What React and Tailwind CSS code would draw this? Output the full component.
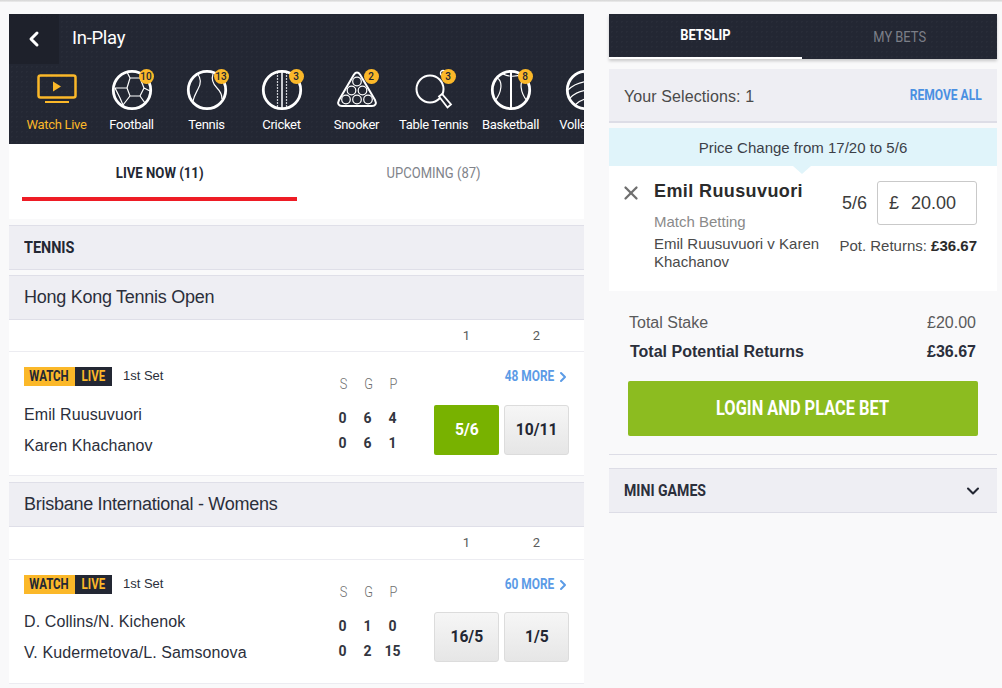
import { ChevronLeft, ChevronRight, ChevronDown, X } from "lucide-react"

const dots = "bg-[#232733] bg-[radial-gradient(#282c38_1px,transparent_1px)] bg-[length:5px_5px]"

const Ring = ({ children }) => (
  <svg width="42" height="42" viewBox="-1 -1 42 42" fill="none" stroke="white" strokeWidth="1.2">
    {children}
    <circle cx="20" cy="20" r="18.7" strokeWidth="2.8" />
  </svg>
)

const icons = {
  football: (
    <Ring>
      <path d="M15 18L18 8H28L32 18L28 26H18ZM15 18H3M18 8L15 2M28 8L33 4M32 18L38 21M18 26L11 35M28 26L33 33M3 18L8 28L11 35" />
    </Ring>
  ),
  tennis: (
    <Ring>
      <path d="M10 3C14 8 14 14 11 19C9 23 7 26 6 31M26 4C24 10 26 14 30 18C33 21 35 24 35 29" />
    </Ring>
  ),
  cricket: (
    <Ring>
      <path d="M15.500 2V38M24.500 2V38" strokeDasharray="2 1" stroke="#c9cbd1" />
      <path d="M20 2V38" strokeWidth="2" stroke="#c9cbd1" />
    </Ring>
  ),
  snooker: (
    <svg width="42" height="42" viewBox="0 0 42 42" fill="none" stroke="white" strokeWidth="1.2">
      <path d="M21 3.500C22 3.500 23 4 24 5.500L39 31C41 35 39 37 36 37H6C3 37 1 35 3 31L18 5.500C19 4 20 3.500 21 3.500Z" strokeWidth="2" />
      <circle cx="21" cy="12.500" r="4.300" />
      <circle cx="15.500" cy="21.500" r="4.300" />
      <circle cx="26.500" cy="21.500" r="4.300" />
      <circle cx="10" cy="30.500" r="4.300" />
      <circle cx="21" cy="30.500" r="4.300" />
      <circle cx="32" cy="30.500" r="4.300" />
    </svg>
  ),
  tabletennis: (
    <svg width="42" height="42" viewBox="0 0 42 42" fill="none" stroke="white" strokeWidth="2">
      <circle cx="17" cy="20" r="13.500" />
      <path d="M26 27.500L29 25L38 35.500L34.500 38.500Z" fill="#232733" strokeWidth="1.800" />
      <circle cx="30" cy="4" r="2.500" strokeWidth="1.400" />
    </svg>
  ),
  basketball: (
    <Ring>
      <path d="M20 2V38" strokeWidth="2" />
      <path d="M6 8C12 11 11 22 4 31M34 8C28 11 29 22 36 31M12 4C18 7 26 7 31 4" />
    </Ring>
  ),
  volleyball: (
    <Ring>
      <path d="M2 20C10 12 22 10 34 12M4 28C12 20 24 18 38 24M9 35C15 28 28 26 36 30M18 2C20 8 26 14 34 12" />
    </Ring>
  ),
}

const sports = [
  { name: "Football", icon: "football", count: 10 },
  { name: "Tennis", icon: "tennis", count: 13 },
  { name: "Cricket", icon: "cricket", count: 3 },
  { name: "Snooker", icon: "snooker", count: 2 },
  { name: "Table Tennis", icon: "tabletennis", count: 3, wide: true },
  { name: "Basketball", icon: "basketball", count: 8 },
  { name: "Volleyball", icon: "volleyball" },
]

const Narrow = ({ children, className = "" }) => (
  <span className={"inline-block font-['Roboto'] whitespace-nowrap " + className}>{children}</span>
)

function SportItem({ sport }) {
  return (
    <div className={"shrink-0 flex flex-col items-center " + (sport.wide ? "w-[79px]" : "w-[75px]")}>
      <div className="relative w-[42px] h-[42px]">
        {icons[sport.icon]}
        {sport.count && (
          <span className="absolute left-[28px] top-0 w-[15px] h-[15px] rounded-full bg-[#fbb829] text-[#232733] text-[10px] leading-[15px] text-center font-['Roboto'] font-medium">
            {sport.count}
          </span>
        )}
      </div>
      <span className="mt-[6px] text-white text-[13px] leading-[16px] tracking-[-0.3px] font-['Roboto'] whitespace-nowrap">{sport.name}</span>
    </div>
  )
}

function Section({ title }) {
  return (
    <div className="h-[45px] mt-[5px] bg-[#eeeef3] border-y border-[#dfdfe8] px-[15px] flex items-center text-[18px] text-[#2b2f3b] font-['Liberation_Sans'] tracking-[-0.27px]">
      {title}
    </div>
  )
}

function Match({ header, offset, nameTop, more, home, away, scoreHome, scoreAway, oddsHome, oddsAway, selected }) {
  return (
    <div className="bg-white">
      <div className={"flex justify-end border-b border-[#ececf1] pr-[15px] pt-[6px] font-['Roboto'] text-[13px] text-[#5b5b5b] " + header}>
        <span className="w-[65px] text-center">1</span>
        <span className="w-[65px] ml-[5px] text-center">2</span>
      </div>
      <div className="relative h-[124px] flex pl-[15px] pr-[15px] border-b border-[#ececf1]">
        <div className="flex-1 pt-[15px]">
          <div className="flex items-center h-[19px]">
            <span className="w-[51px] h-[19px] bg-[#fbb829] text-[#232733] flex items-center justify-center">
              <Narrow className="scale-x-[.82] font-bold text-[14px]">WATCH</Narrow>
            </span>
            <span className="w-[37px] h-[19px] bg-[#232733] text-[#fbb829] flex items-center justify-center">
              <Narrow className="scale-x-[.82] font-bold text-[14px]">LIVE</Narrow>
            </span>
            <span className="ml-[11px] -mt-[2px] text-[13px] text-[#2b2f3b] font-['Liberation_Sans']">1st Set</span>
          </div>
          <div className={"text-[16px] leading-[20px] text-[#2b2f3b] font-['Liberation_Sans'] tracking-[0.1px] " + nameTop}>{home}</div>
          <div className="mt-[11px] text-[16px] leading-[20px] text-[#2b2f3b] font-['Liberation_Sans'] tracking-[0.1px]">{away}</div>
        </div>
        <div className="w-[75px] mr-[29px] -ml-[1px] pt-[24px] font-['Roboto'] text-center">
          <div className="grid grid-cols-3 text-[15px] leading-[16px] font-light text-[#6e6e6e]">
            <span className="scale-x-[.85] translate-x-[1px]">S</span><span className="scale-x-[.85] translate-x-[1px]">G</span><span className="scale-x-[.85] translate-x-[1px]">P</span>
          </div>
          <div className="grid grid-cols-3 mt-[18px] text-[14px] leading-[16px] font-bold text-[#33363f]">
            {scoreHome.map((s, i) => <span key={i}>{s}</span>)}
          </div>
          <div className="grid grid-cols-3 mt-[9px] text-[14px] leading-[16px] font-bold text-[#33363f]">
            {scoreAway.map((s, i) => <span key={i}>{s}</span>)}
          </div>
        </div>
        <div className={"w-[135px] flex gap-[5px] " + offset}>
          <OddsButton value={oddsHome} selected={selected} />
          <OddsButton value={oddsAway} />
        </div>
        <div className="absolute right-[13px] top-[14px] flex items-center text-[#5b9be6]">
          <Narrow className="scale-x-[.85] origin-right font-bold text-[14px]">{more} MORE</Narrow>
          <ChevronRight size={16} strokeWidth={3} className="ml-[1px]" />
        </div>
      </div>
    </div>
  )
}

function OddsButton({ value, selected }) {
  if (selected) {
    return (
      <button className="w-[65px] h-[50px] rounded-[2px] bg-[#78b200] text-white">
        <Narrow className="font-bold text-[17px] scale-x-[.92]">{value}</Narrow>
      </button>
    )
  }
  return (
    <button className="w-[65px] h-[50px] rounded-[3px] border border-[#dcdcdc] bg-gradient-to-b from-[#f6f6f6] to-[#e6e6e6] text-[#232733]">
      <Narrow className="font-bold text-[17px] scale-x-[.92]">{value}</Narrow>
    </button>
  )
}

export default function App() {
  return (
    <div className="h-[688px] overflow-hidden bg-[#f9f9fa]">
      <div className="h-[2px] bg-gradient-to-b from-[#d4d4d4] to-[#eeeeee]" />
      <div className="flex pl-[9px] pt-[12px]">
        <div className="w-[575px] shrink-0">
          <div className={"h-[130px] " + dots}>
            <div className="flex items-center h-[50px]">
              <div className="w-[50px] h-[50px] bg-[#1e212b] flex items-center justify-center text-white">
                <ChevronLeft size={24} strokeWidth={3} />
              </div>
              <span className="ml-[13px] text-white text-[18.5px] font-['Roboto'] tracking-[-0.3px]">In-Play</span>
            </div>
            <div className="flex pl-[10px] pt-[5px] overflow-hidden">
              <div className="shrink-0 w-[75px] flex flex-col items-center">
                <svg width="42" height="42" viewBox="0 0 42 42" fill="#fbb829">
                  <rect x="2.500" y="6.500" width="37" height="22" rx="2" fill="none" stroke="#fbb829" strokeWidth="2.500" />
                  <path d="M17 12.500L25 17.500L17 22.500Z" />
                  <rect x="9" y="32" width="24" height="2" />
                </svg>
                <span className="mt-[6px] text-[#fbb829] text-[13px] leading-[16px] tracking-[-0.3px] font-['Roboto'] whitespace-nowrap">Watch Live</span>
              </div>
              {sports.map((s) => <SportItem key={s.name} sport={s} />)}
            </div>
          </div>

          <div className="h-[75px] bg-white px-[13px] flex font-['Roboto'] text-[14px]">
            <div className="w-[275px] h-[57px] border-b-4 border-[#ee1c25] flex items-center justify-center pt-[6px]">
              <Narrow className="scale-x-[.94] font-bold text-[#232733]">LIVE NOW (11)</Narrow>
            </div>
            <div className="w-[275px] h-[57px] flex items-center justify-center pt-[2px]">
              <Narrow className="scale-x-[.93] text-[#80838a]">UPCOMING (87)</Narrow>
            </div>
          </div>

          <div className="h-[45px] mt-[6px] bg-[#eeeef3] border-y border-[#dfdfe8] px-[15px] flex items-center">
            <Narrow className="scale-x-[.9] origin-left font-bold text-[16px] text-[#232733]">TENNIS</Narrow>
          </div>
          <Section title="Hong Kong Tennis Open" />
          <Match header="h-[32px]" offset="pt-[53px]" nameTop="mt-[19px]" more="48" home="Emil Ruusuvuori" away="Karen Khachanov"
            scoreHome={[0, 6, 4]} scoreAway={[0, 6, 1]} oddsHome="5/6" oddsAway="10/11" selected />
          <div className="h-[1px]" />
          <Section title="Brisbane International - Womens" />
          <Match header="h-[33px]" offset="pt-[52px]" nameTop="mt-[18px]" more="60" home="D. Collins/N. Kichenok" away="V. Kudermetova/L. Samsonova"
            scoreHome={[0, 1, 0]} scoreAway={[0, 2, 15]} oddsHome="16/5" oddsAway="1/5" />
        </div>

        <div className="w-[388px] ml-[25px] shrink-0">
          <div className={"h-[45px] flex shadow-[0_2px_3px_rgba(0,0,0,0.2)] " + dots}>
            <div className="w-[193px] border-b-2 border-white flex items-center justify-center">
              <Narrow className="scale-x-[.92] font-bold text-[14px] text-white">BETSLIP</Narrow>
            </div>
            <div className="w-[195px] flex items-center justify-center pt-[1px]">
              <Narrow className="scale-x-[.86] text-[15px] text-[#7c7f88]">MY BETS</Narrow>
            </div>
          </div>
          <div className="mt-[10px] h-[54px] bg-[#eeeef3] border-b-2 border-[#dddde6] pl-[15px] pr-[15px] flex items-center justify-between">
            <span className="mt-[3px] text-[16px] text-[#4a4a4a] font-['Liberation_Sans'] tracking-[0.1px]">Your Selections: 1</span>
            <Narrow className="scale-x-[.86] origin-right font-bold text-[14px] text-[#4a90e2]">REMOVE ALL</Narrow>
          </div>
          <div className="mt-[5px] h-[38px] pt-[2px] bg-[#e0f4fa] flex items-center justify-center text-[15px] text-[#3c3f48] font-['Liberation_Sans']">
            Price Change from 17/20 to 5/6
          </div>
          <div className="relative h-[125px] bg-white flex font-['Liberation_Sans']">
            <div className="absolute left-[184px] top-0 w-0 h-0 border-x-[9px] border-x-transparent border-t-[8px] border-t-[#e0f4fa]" />
            <div className="w-[45px] pl-[11px] pt-[16px] text-[#6f6f6f]">
              <X size={22} strokeWidth={2.5} />
            </div>
            <div className="w-[180px] pt-[14px] shrink-0">
              <div className="text-[18px] leading-[22px] font-bold text-[#2b2b2b] tracking-[0.4px]">Emil Ruusuvuori</div>
              <div className="mt-[10px] text-[15px] leading-[20px] text-[#8a8a8a]">Match Betting</div>
              <div className="mt-[3px] text-[15px] leading-[18px] text-[#4a4a4a]">Emil Ruusuvuori v Karen Khachanov</div>
            </div>
            <div className="flex-1 pt-[15px] pr-[20px]">
              <div className="flex items-center justify-end">
                <span className="text-[18px] text-[#3c3c3c] mr-[10px]">5/6</span>
                <div className="w-[100px] h-[44px] shrink-0 border border-[#c9c9c9] rounded-[3px] flex items-center pl-[11px] text-[18px] text-[#3c3c3c]">
                  <span className="w-[22px]">£</span>
                  <span>20.00</span>
                </div>
              </div>
              <div className="mt-[10px] text-right text-[15px] text-[#4a4a4a] whitespace-nowrap">
                Pot. Returns: <span className="font-bold text-[#2b2b2b]">£36.67</span>
              </div>
            </div>
          </div>
          <div className="pt-[22px] pl-[20px] pr-[21px] font-['Liberation_Sans'] text-[#2b2f3b]">
            <div className="flex justify-between text-[16px] leading-[20px] text-[#5a5a5a]">
              <span>Total Stake</span><span>£20.00</span>
            </div>
            <div className="flex justify-between mt-[9px] pl-[1px] text-[16px] leading-[20px] font-bold">
              <span>Total Potential Returns</span><span>£36.67</span>
            </div>
          </div>
          <button className="block mt-[19px] ml-[19px] w-[350px] h-[55px] rounded-[2px] bg-[#8cbc20] text-white">
            <Narrow className="font-bold text-[20px] scale-x-[.82] -translate-y-[1px]">LOGIN AND PLACE BET</Narrow>
          </button>
          <div className="mt-[18px] border-t border-[#dddde6]" />
          <div className="mt-[13px] h-[45px] bg-[#eeeef3] border-y border-[#dddde6] pl-[15px] pr-[14px] flex items-center justify-between">
            <Narrow className="scale-x-[.88] origin-left font-bold text-[16px] text-[#2b2f3b]">MINI GAMES</Narrow>
            <ChevronDown size={20} strokeWidth={2.5} className="text-[#232733]" />
          </div>
        </div>
      </div>
    </div>
  )
}
